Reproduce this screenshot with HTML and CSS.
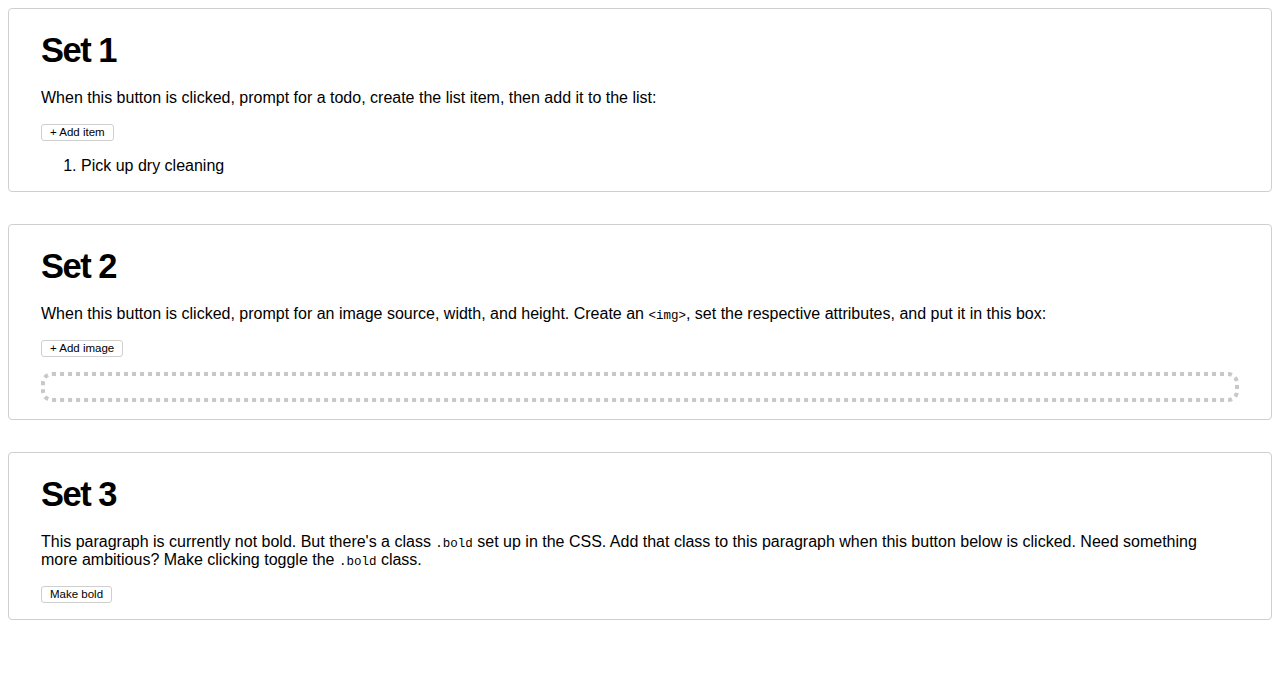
FILE: index.html
```html
<!DOCTYPE html>
<html lang="en">
<head>
<meta charset="utf-8">
<title>DOM exercises</title>
<link rel="stylesheet" href="styles.css">
</head>
<body>
  <section class="set">
    <h1 class="set-title">Set 1</h1>
    <p class="set-text">When this button is clicked, prompt for a todo, create the list item, then add it to the list:</p>
    <button class="btn">+ Add item</button>
    <ol class="todo-list">
      <li>Pick up dry cleaning</li>
    </ol>
  </section>

  <section class="set">
    <h1 class="set-title">Set 2</h1>
    <p class="set-text">When this button is clicked, prompt for an image source, width, and height. Create an <code>&lt;img&gt;</code>, set the respective attributes, and put it in this box:</p>
    <button class="btn">+ Add image</button>
    <div class="image-box">
      <svg class="image-box-frame" aria-hidden="true"><rect x="0" y="0" width="100%" height="100%" rx="9" ry="9"></rect></svg>
    </div>
  </section>

  <section class="set">
    <h1 class="set-title">Set 3</h1>
    <p class="set-text set-text-narrow">This paragraph is currently not bold. But there's a class <code>.bold</code> set up in the CSS. Add that class to this paragraph when this button below is clicked. Need something more ambitious? Make clicking toggle the <code>.bold</code> class.</p>
    <button class="btn btn-last">Make bold</button>
  </section>
</body>
</html>
```

FILE: styles.css
```css
html, body {
  background: #fff;
}

body {
  margin: 8px;
  font-family: "Liberation Sans", Arial, Helvetica, sans-serif;
  font-size: 16px;
  color: #000;
}

.set {
  border: 1px solid #cfcfcf;
  border-radius: 4px;
  padding: 0 32px;
  margin-bottom: 32px;
  display: flow-root;
}

.set-title {
  font-size: 34.5px;
  line-height: 40px;
  letter-spacing: -1.5px;
  font-weight: bold;
  margin: 21px 0 19px;
}

.set-text {
  margin: 0 0 17px;
  line-height: 18.2px;
}

.set-text-narrow {
  padding-right: 6px;
}

code {
  font-family: "Liberation Mono", "Courier New", monospace;
  font-size: 12.5px;
  line-height: 1;
}

.btn {
  display: block;
  font-family: "Liberation Sans", Arial, Helvetica, sans-serif;
  font-size: 11.5px;
  line-height: 13px;
  padding: 1px 8px;
  background: #fff;
  color: #000;
  border: 1px solid #cfcfcf;
  border-radius: 3px;
}

.btn-last {
  margin-bottom: 16px;
}

.todo-list {
  margin: 16px 0 15px;
  padding-left: 40px;
  line-height: 18.4px;
}

.image-box {
  margin: 17px 0 16px;
  height: 29px;
}

.image-box-frame {
  display: block;
  margin: 2px;
  width: calc(100% - 4px);
  height: 26px;
  overflow: visible;
}

.image-box-frame rect {
  fill: none;
  stroke: #c8c8c8;
  stroke-width: 4;
  stroke-dasharray: 4 4;
}
```
